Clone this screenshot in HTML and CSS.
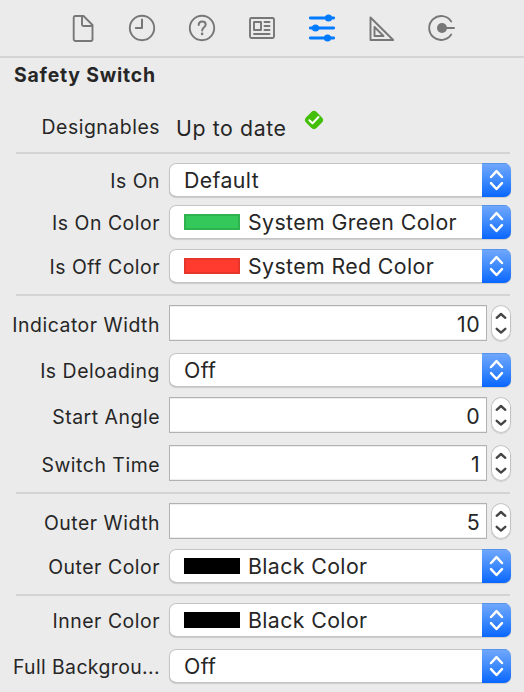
FILE: index.html
```html
<!DOCTYPE html>
<html lang="en">
<head>
<meta charset="utf-8">
<title>Attributes Inspector</title>
<link rel="stylesheet" href="styles.css">
</head>
<body>
<svg width="0" height="0" class="defs">
  <symbol id="updown" viewBox="0 0 29 34"><path d="M9 14l5.500-5.800L20 14M9 20.200l5.500 5.800L20 20.200"/></symbol>
  <symbol id="step" viewBox="0 0 20 36"><path d="M5.700 12.800L10 9l4.300 3.800M5.700 23.800L10 27.600l4.300-3.800"/></symbol>
</svg>
<nav class="tabs">
  <svg class="tab" viewBox="0 0 30 30"><path d="M8.200 3h8.300l9 9v14.300a1.700 1.700 0 0 1-1.700 1.700H8.200a1.700 1.700 0 0 1-1.500-1.700V4.700A1.700 1.700 0 0 1 8.200 3z"/><path d="M15 3.500v8a1.500 1.500 0 0 0 1.500 1.500H25"/></svg>
  <svg class="tab" viewBox="0 0 30 30"><circle cx="15" cy="15" r="12.200"/><path d="M15 6.500V15H8.800" stroke-width="2"/></svg>
  <svg class="tab" viewBox="0 0 30 30"><circle cx="15" cy="15" r="12.200"/><path d="M11.700 12c0-2.200 1.400-3.500 3.500-3.500s3.500 1.200 3.500 3.100c0 2.700-3.500 2.800-3.500 5.900" stroke-width="2"/><circle class="solid" cx="15.100" cy="20.900" r="1.300"/></svg>
  <svg class="tab" viewBox="0 0 30 30"><rect x="3" y="5" width="24" height="20" rx="1.500"/><rect x="7" y="9" width="7" height="8"/><path d="M17.500 9h5M17.500 13h5M17.500 17h5M7 21h15.500"/></svg>
  <svg class="tab active" viewBox="0 0 30 30"><path d="M3.300 5h23.400M3.300 15h23.400M3.300 25h23.400" stroke-width="2.800"/><circle class="solid" cx="21.500" cy="5" r="3.600"/><circle class="solid" cx="8.500" cy="15" r="3.600"/><circle class="solid" cx="20.500" cy="25" r="3.600"/></svg>
  <svg class="tab" viewBox="0 0 30 30"><path d="M3.500 4.500V27h22.700z"/><path d="M7.500 14v9h9z"/></svg>
  <svg class="tab" viewBox="0 0 30 30"><path d="M24.200 8.400A12 12 0 1 0 24.200 21.600M15 15h12"/><circle class="solid" cx="15" cy="15" r="5"/></svg>
</nav>
<h1 class="title">Safety Switch</h1>
<main class="form">
  <section class="group status">
    <div class="row"><label>Designables</label><span class="state">Up to date</span>
      <svg class="check" viewBox="0 0 20 20"><rect x="2.500" y="2.500" width="15" height="15" rx="4" transform="rotate(45 10 10)"/><path d="M5.400 10.300l3.100 3.100 6-6.400"/></svg></div>
  </section>
  <section class="group first">
    <div class="row"><label>Is On</label><div class="popup"><span class="value">Default</span><svg class="arrows"><use href="#updown"/></svg></div></div>
    <div class="row near"><label>Is On Color</label><div class="popup"><i class="swatch green"></i><span class="value">System Green Color</span><svg class="arrows"><use href="#updown"/></svg></div></div>
    <div class="row"><label>Is Off Color</label><div class="popup"><i class="swatch red"></i><span class="value">System Red Color</span><svg class="arrows"><use href="#updown"/></svg></div></div>
  </section>
  <section class="group second">
    <div class="row tall"><label>Indicator Width</label><div class="field">10</div><svg class="stepper"><use href="#step"/></svg></div>
    <div class="row wide"><label>Is Deloading</label><div class="popup"><span class="value">Off</span><svg class="arrows"><use href="#updown"/></svg></div></div>
    <div class="row tall"><label>Start Angle</label><div class="field">0</div><svg class="stepper"><use href="#step"/></svg></div>
    <div class="row tall wide"><label>Switch Time</label><div class="field">1</div><svg class="stepper"><use href="#step"/></svg></div>
  </section>
  <section class="group third">
    <div class="row tall"><label>Outer Width</label><div class="field">5</div><svg class="stepper"><use href="#step"/></svg></div>
    <div class="row"><label>Outer Color</label><div class="popup"><i class="swatch black"></i><span class="value">Black Color</span><svg class="arrows"><use href="#updown"/></svg></div></div>
  </section>
  <section class="group fourth">
    <div class="row"><label>Inner Color</label><div class="popup"><i class="swatch black"></i><span class="value">Black Color</span><svg class="arrows"><use href="#updown"/></svg></div></div>
    <div class="row wide"><label class="cut">Full Backgrou...</label><div class="popup"><span class="value">Off</span><svg class="arrows"><use href="#updown"/></svg></div></div>
  </section>
</main>
</body>
</html>
```
FILE: styles.css
```css
* { box-sizing: border-box; }
body {
  margin: 0;
  height: 692px;
  overflow: hidden;
  background: #ebebeb;
  color: #262626;
  font-family: Inter, "Liberation Sans", sans-serif;
  font-size: 21.3px;
}
.defs { position: absolute; }
.tabs {
  display: flex;
  gap: 30px;
  height: 58px;
  padding: 13px 0 0 67px;
  border-bottom: 2px solid #d4d4d4;
}
.tab {
  width: 30px;
  height: 30px;
  fill: none;
  stroke: #777;
  stroke-width: 1.9;
  stroke-linecap: round;
  stroke-linejoin: round;
  color: #777;
}
.tab.active { stroke: #007aff; color: #007aff; }
.tab .solid { fill: currentColor; stroke: none; }
.title {
  margin: 0;
  padding-left: 14px;
  height: 44px;
  font-size: 19.4px;
  font-weight: 700;
  line-height: 34px;
  letter-spacing: .8px;
}
.form { padding: 0 13px 0 0; }
.group { display: flex; flex-direction: column; }
.group + .group::before {
  content: "";
  height: 2px;
  margin: 0 1px 0 16px;
  background: #d4d4d4;
}
.status { height: 50px; padding-top: 7px; }
.group.first::before { margin-bottom: 9px; }
.group.second { margin-top: 11px; }
.group.second::before { margin-bottom: 9px; }
.group.third { margin-top: 11px; }
.group.third::before { margin-bottom: 9px; }
.group.fourth { margin-top: 11px; }
.group.fourth::before { margin-bottom: 7px; }
.row { display: flex; height: 34px; line-height: 34px; }
.row.tall { height: 36px; line-height: 38px; }
.row + .row { margin-top: 10px; }
.row + .row.near { margin-top: 8px; }
.row + .row.wide { margin-top: 12px; }
label {
  width: 160px;
  margin-right: 9px;
  padding-top: 1px;
  flex: none;
  text-align: right;
  font-size: 19.4px;
  letter-spacing: .53px;
  white-space: nowrap;
}
label.cut { letter-spacing: .4px; }
.state { padding-left: 7px; line-height: 39px; letter-spacing: .6px; }
.check { width: 20px; height: 20px; margin: 1px 0 0 17px; fill: #43bf09; }
.check path { fill: none; stroke: #fff; stroke-width: 2; stroke-linecap: round; stroke-linejoin: round; }
.popup {
  display: flex;
  align-items: center;
  flex: 1;
  padding-left: 15px;
  overflow: hidden;
  background: #fff;
  border-radius: 7px;
  box-shadow: inset 0 0 0 1px #c4c4c4, inset 0 -1px 0 #aaa, 0 1px 1px #0002;
}
.value { flex: 1; white-space: nowrap; letter-spacing: .39px; }
.arrows {
  width: 29px;
  height: 34px;
  background: linear-gradient(#71a8fb, #408bfd 50%, #0866ff);
  box-shadow: inset 0 1px 0 #5795ec;
  fill: none;
  stroke: #fff;
  stroke-width: 2.5;
  stroke-linecap: round;
  stroke-linejoin: round;
}
.swatch { width: 56px; height: 16px; margin-right: 8px; border: 2px solid; }
.green { background: #34c759; border-color: #2fb350; }
.red { background: #ff3b30; border-color: #e6352b; }
.black { background: #000; border-color: #000; }
.field {
  width: 318px;
  padding-right: 6px;
  line-height: 36px;
  letter-spacing: .4px;
  background: #fff;
  border: 1px solid #b2b2b2;
  box-shadow: inset 0 1px #eee, inset 0 -1px #eee;
  text-align: right;
}
.stepper {
  width: 20px;
  height: 36px;
  margin-left: 4px;
  background: #fff;
  border-radius: 10px;
  box-shadow: inset 0 0 0 1px #c2c2c2, 0 1px 1px #0002;
  fill: none;
  stroke: #454545;
  stroke-width: 2.4;
  stroke-linecap: round;
  stroke-linejoin: round;
}
```
